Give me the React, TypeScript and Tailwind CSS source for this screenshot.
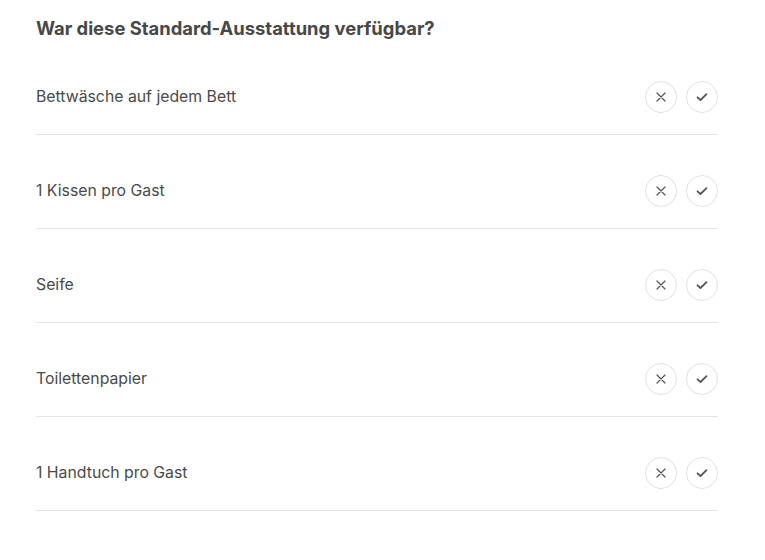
import React from "react";

const items = [
  "Bettwäsche auf jedem Bett",
  "1 Kissen pro Gast",
  "Seife",
  "Toilettenpapier",
  "1 Handtuch pro Gast",
];

function XIcon() {
  return (
    <svg width="10" height="10" viewBox="0 0 10 10" fill="none">
      <path d="M1 1 L9 9 M9 1 L1 9" stroke="#555555" strokeWidth="1.2" strokeLinecap="round" />
    </svg>
  );
}

function CheckIcon() {
  return (
    <svg width="12" height="10" viewBox="0 0 12 10" fill="none">
      <path d="M1.5 5.3 L4.5 8 L10.5 2.2" stroke="#555555" strokeWidth="1.8" strokeLinecap="round" strokeLinejoin="round" />
    </svg>
  );
}

export default function App() {
  return (
    <div className="w-[765px] h-[560px] bg-white px-[36px] text-[#484848]" style={{ fontFamily: "Inter, 'Noto Sans', sans-serif" }}>
      <h1 className="pt-[16px] text-[18.4px] leading-[25px] font-bold">
        War diese Standard-Ausstattung verfügbar?
      </h1>
      <div className="w-[682px]">
        {items.map((t) => (
          <div key={t} className="flex items-center justify-between pt-[40px] pb-[21px] border-b border-[#e4e4e4]">
            <span className="text-[15.8px] leading-[32px] text-[#4a4a4a]">{t}</span>
            <div className="flex gap-[9px] pr-[0px]">
              <button className="w-[32px] h-[32px] rounded-full border border-[#e2e2e2] flex items-center justify-center">
                <XIcon />
              </button>
              <button className="w-[32px] h-[32px] rounded-full border border-[#e2e2e2] flex items-center justify-center">
                <CheckIcon />
              </button>
            </div>
          </div>
        ))}
      </div>
    </div>
  );
}
